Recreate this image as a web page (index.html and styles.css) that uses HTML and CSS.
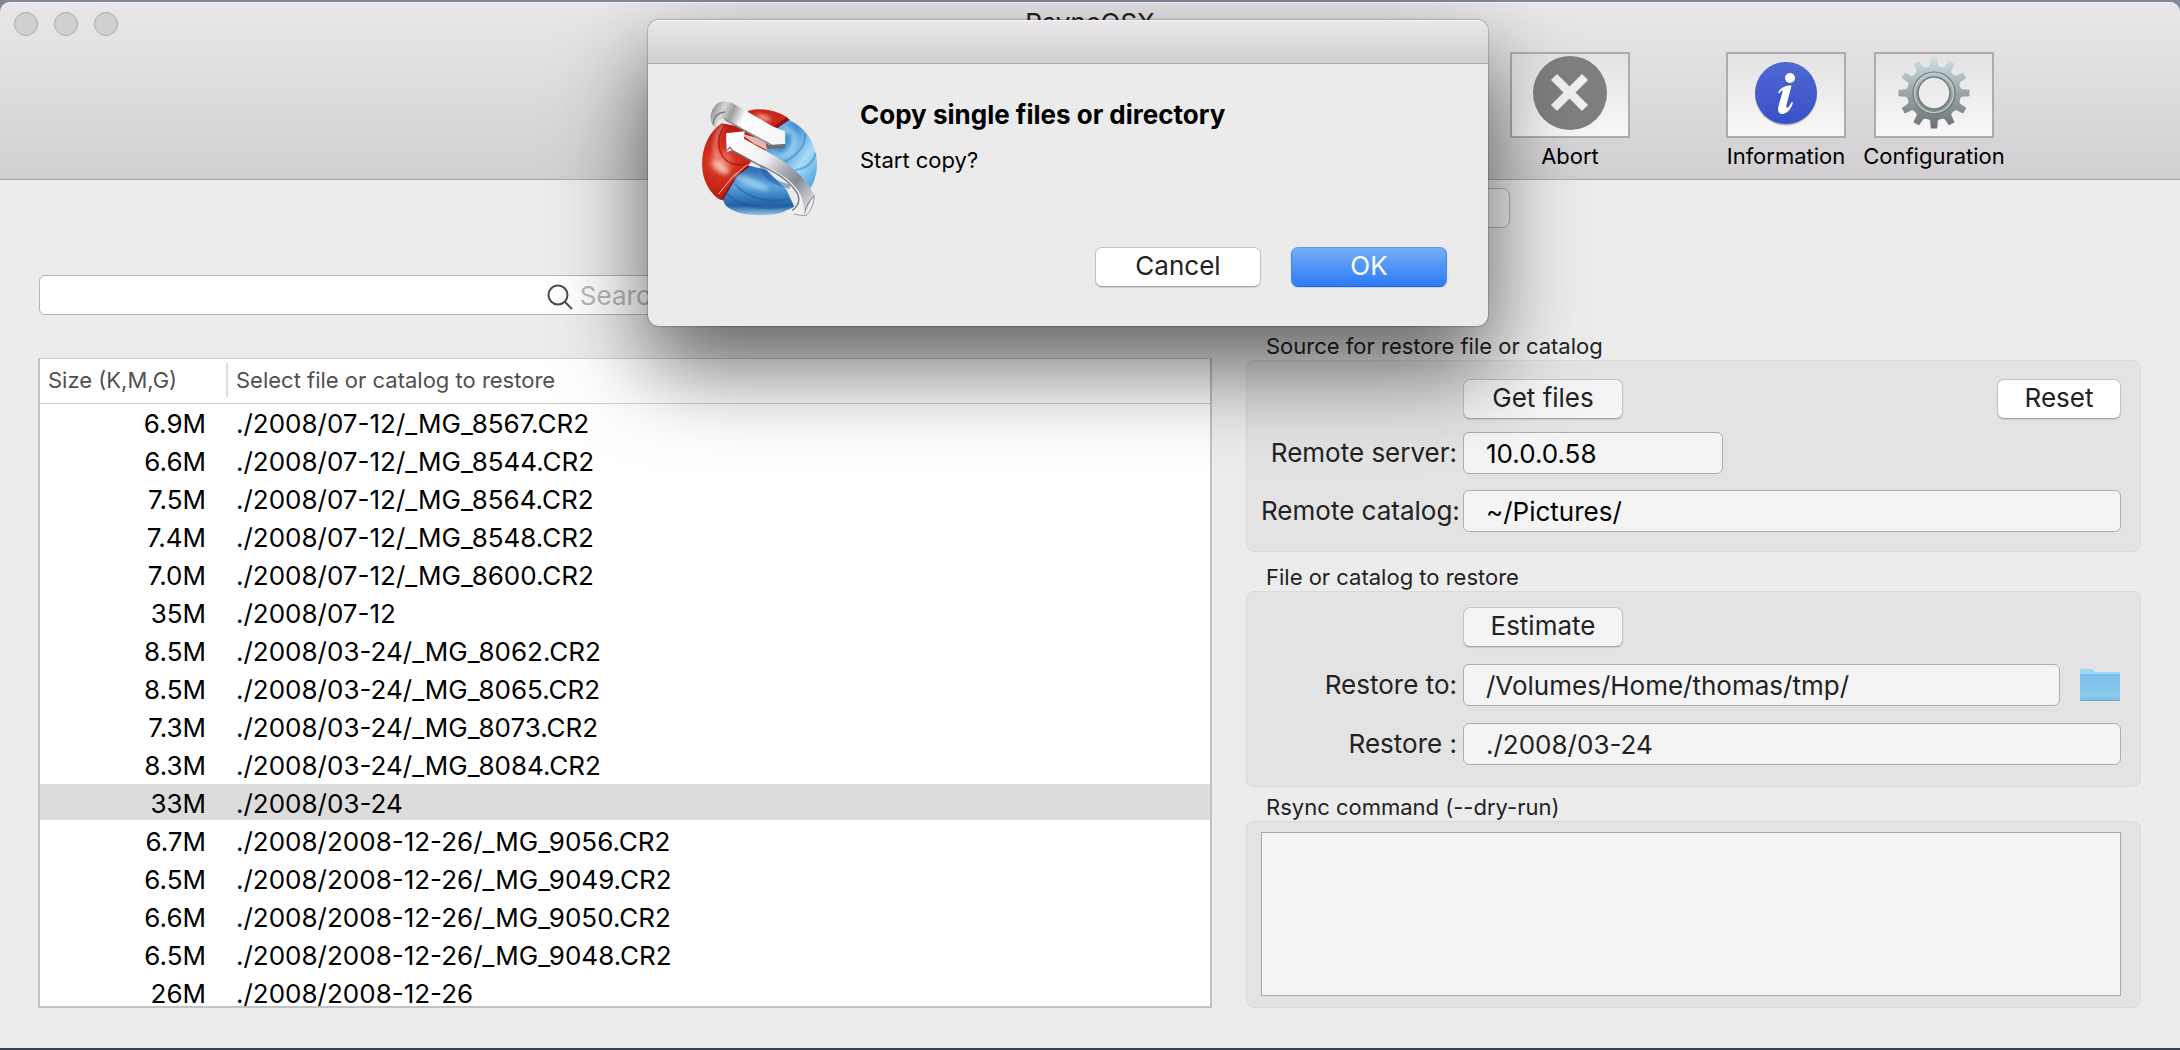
FILE: index.html
```html
<!DOCTYPE html>
<html lang="en">
<head>
<meta charset="utf-8">
<title>RsyncOSX</title>
<link rel="stylesheet" href="styles.css">
</head>
<body>
<div class="window">
  <header class="titlebar">
    <div class="lights"><span></span><span></span><span></span></div>
    <h1 class="title">RsyncOSX</h1>
    <nav class="toolbar" aria-label="Toolbar">
      <button class="tool tool-abort" type="button">
        <span class="tool-frame">
          <svg width="74" height="74" viewBox="0 0 74 74" aria-hidden="true">
            <circle cx="37" cy="37" r="37" fill="#7f7f7f"/>
            <path d="M21 21 52 52M52 21 21 52" stroke="#f0f0f0" stroke-width="8.500"/>
          </svg>
        </span>
        <span>Abort</span>
      </button>
      <button class="tool" type="button">
        <span class="tool-frame">
          <svg width="66" height="74" viewBox="0 0 66 74" aria-hidden="true">
            <defs>
              <linearGradient id="info" x1="0" y1="0" x2="0" y2="1"><stop offset="0" stop-color="#5068d2"/><stop offset="1" stop-color="#3850c8"/></linearGradient>
            </defs>
            <circle cx="33" cy="38.500" r="31" fill="#000" opacity=".25"/>
            <circle cx="33" cy="37" r="31" fill="url(#info)"/>
            <circle cx="37" cy="22" r="5" fill="#fff"/>
            <path d="M25 37C27 32 32 30 36 29.500L38.500 29.500 33.500 49C32.800 52 34 52.500 35.500 51 37 49.500 38 47 38.500 46L40 46.500C39 51 35 58 29 58 25 58 24.500 54 25.500 50L29.500 36C30 34 29 33.500 26.500 37Z" fill="#fff"/>
          </svg>
        </span>
        <span>Information</span>
      </button>
      <button class="tool" type="button">
        <span class="tool-frame">
          <svg width="74" height="74" viewBox="-37 -37 74 74" aria-hidden="true">
            <defs>
              <linearGradient id="gear" gradientUnits="userSpaceOnUse" x1="0" y1="-36" x2="0" y2="36"><stop offset="0" stop-color="#cfe0e6"/><stop offset=".5" stop-color="#9aa5a8"/><stop offset="1" stop-color="#6c7072"/></linearGradient>
              <mask id="teeth">
                <g fill="#fff">
                  <circle r="27"/>
                  <path id="tooth" d="M-7-24-3.800-28-3.200-35.500H3.200L3.800-28 7-24Z"/>
                  <use href="#tooth" transform="rotate(30)"/><use href="#tooth" transform="rotate(60)"/><use href="#tooth" transform="rotate(90)"/>
                  <use href="#tooth" transform="rotate(120)"/><use href="#tooth" transform="rotate(150)"/><use href="#tooth" transform="rotate(180)"/>
                  <use href="#tooth" transform="rotate(210)"/><use href="#tooth" transform="rotate(240)"/><use href="#tooth" transform="rotate(270)"/>
                  <use href="#tooth" transform="rotate(300)"/><use href="#tooth" transform="rotate(330)"/>
                </g>
                <circle r="15.500" fill="#000"/>
              </mask>
            </defs>
            <rect x="-37" y="-37" width="74" height="74" fill="url(#gear)" mask="url(#teeth)"/>
            <circle r="21" fill="none" stroke="#6f7a7d" stroke-width="1.200"/>
            <circle r="19.500" fill="none" stroke="#c3cdd0" stroke-width="1.200"/>
            <circle r="16" fill="none" stroke="#747a7c" stroke-width="1.500"/>
          </svg>
        </span>
        <span>Configuration</span>
      </button>
    </nav>
  </header>

  <main class="content">
    <div class="profile-row"><button class="profile" type="button" aria-label="Task"></button></div>
    <div class="columns">
      <section class="left">
        <div class="search">
          <svg class="search-icon" width="26" height="26" viewBox="0 0 26 26" fill="none" stroke="#4c4c4c" stroke-width="2" aria-hidden="true"><circle cx="11" cy="11" r="9.500"/><path d="M18 18 25 25"/></svg>
          <input type="search" placeholder="Search" aria-label="Search">
        </div>
        <div class="list">
          <table>
            <thead><tr><th scope="col" class="size"><span>Size (K,M,G)</span></th><th scope="col">Select file or catalog to restore</th></tr></thead>
            <tbody>
              <tr><td>6.9M</td><td>./2008/07-12/_MG_8567.CR2</td></tr>
              <tr><td>6.6M</td><td>./2008/07-12/_MG_8544.CR2</td></tr>
              <tr><td>7.5M</td><td>./2008/07-12/_MG_8564.CR2</td></tr>
              <tr><td>7.4M</td><td>./2008/07-12/_MG_8548.CR2</td></tr>
              <tr><td>7.0M</td><td>./2008/07-12/_MG_8600.CR2</td></tr>
              <tr><td>35M</td><td>./2008/07-12</td></tr>
              <tr><td>8.5M</td><td>./2008/03-24/_MG_8062.CR2</td></tr>
              <tr><td>8.5M</td><td>./2008/03-24/_MG_8065.CR2</td></tr>
              <tr><td>7.3M</td><td>./2008/03-24/_MG_8073.CR2</td></tr>
              <tr><td>8.3M</td><td>./2008/03-24/_MG_8084.CR2</td></tr>
              <tr class="selected"><td>33M</td><td>./2008/03-24</td></tr>
              <tr><td>6.7M</td><td>./2008/2008-12-26/_MG_9056.CR2</td></tr>
              <tr><td>6.5M</td><td>./2008/2008-12-26/_MG_9049.CR2</td></tr>
              <tr><td>6.6M</td><td>./2008/2008-12-26/_MG_9050.CR2</td></tr>
              <tr><td>6.5M</td><td>./2008/2008-12-26/_MG_9048.CR2</td></tr>
              <tr><td>26M</td><td>./2008/2008-12-26</td></tr>
            </tbody>
          </table>
        </div>
      </section>

      <section class="right">
        <h2>Source for restore file or catalog</h2>
        <div class="group source">
          <div class="row buttons"><button class="btn wide dim" type="button">Get files</button><button class="btn reset" type="button">Reset</button></div>
          <div class="row"><label for="server">Remote server:</label><input class="field short" id="server" type="text" value="10.0.0.58"></div>
          <div class="row"><label for="catalog">Remote catalog:</label><input class="field" id="catalog" type="text" value="~/Pictures/"></div>
        </div>
        <h2 class="second">File or catalog to restore</h2>
        <div class="group target">
          <div class="row buttons"><button class="btn wide dim" type="button">Estimate</button></div>
          <div class="row">
            <label for="restore-to">Restore to:</label><input class="field soft" id="restore-to" type="text" value="/Volumes/Home/thomas/tmp/">
            <button class="folder" type="button" aria-label="Choose folder">
              <svg width="42" height="34" viewBox="0 0 42 34" aria-hidden="true">
                <defs><linearGradient id="fold" x1="0" y1="0" x2="0" y2="1"><stop offset="0" stop-color="#78bfe8"/><stop offset=".8" stop-color="#8accef"/><stop offset="1" stop-color="#7dbbdd"/></linearGradient></defs>
                <path d="M1 32V2.500Q1 1 2.500 1H12.500Q14 1 14.800 2.600L15.500 4H39.500Q41 4 41 5.500V32Z" fill="#9dd5f2"/>
                <path d="M1 6H41V31.500Q41 33 39.500 33H2.500Q1 33 1 31.500Z" fill="url(#fold)"/>
                <path d="M1.500 32.500H40.500" stroke="#77a3bc"/>
              </svg>
            </button>
          </div>
          <div class="row"><label for="restore">Restore :</label><input class="field soft" id="restore" type="text" value="./2008/03-24"></div>
        </div>
        <h2 class="third"><label for="command">Rsync command (--dry-run)</label></h2>
        <div class="group output"><textarea id="command"></textarea></div>
      </section>
    </div>
  </main>

  <dialog class="sheet" open aria-labelledby="sheet-title">
    <div class="sheet-bar"></div>
    <div class="sheet-body">
      <svg class="app-icon" width="140" height="140" viewBox="0 0 420 420" aria-hidden="true">
        <defs>
          <radialGradient id="red" gradientUnits="userSpaceOnUse" cx="95" cy="215" r="150"><stop offset="0" stop-color="#f08c78"/><stop offset=".3" stop-color="#d3301f"/><stop offset=".75" stop-color="#b8190f"/><stop offset="1" stop-color="#d94a38"/></radialGradient>
          <linearGradient id="blueR" x1="0" y1="0" x2="1" y2="1"><stop offset="0" stop-color="#9fd0f2"/><stop offset=".35" stop-color="#3b8fd2"/><stop offset=".65" stop-color="#a9dcf8"/><stop offset="1" stop-color="#3795d6"/></linearGradient>
          <linearGradient id="blueB" x1="0" y1="0" x2="0" y2="1"><stop offset="0" stop-color="#2e62b0"/><stop offset=".4" stop-color="#5aa6dd"/><stop offset=".8" stop-color="#205fa5"/><stop offset="1" stop-color="#9cc8ea"/></linearGradient>
          <linearGradient id="silver" gradientUnits="userSpaceOnUse" x1="110" y1="140" x2="370" y2="350"><stop offset="0" stop-color="#fff"/><stop offset=".4" stop-color="#f0f0f2"/><stop offset=".6" stop-color="#a9abb3"/><stop offset=".74" stop-color="#858a96"/><stop offset=".86" stop-color="#b4b6bb"/><stop offset="1" stop-color="#e4e4e6"/></linearGradient>
          <linearGradient id="silverTop" gradientUnits="userSpaceOnUse" x1="65" y1="55" x2="280" y2="150"><stop offset="0" stop-color="#8d8d8d"/><stop offset=".14" stop-color="#d7d7d7"/><stop offset=".26" stop-color="#9d9d9d"/><stop offset=".42" stop-color="#fff"/><stop offset="1" stop-color="#f5f5f5"/></linearGradient>
          <filter id="soft" x="-50%" y="-50%" width="200%" height="200%"><feGaussianBlur stdDeviation="7"/></filter>
        </defs>
        <path d="M175 62Q235 48 292 82L258 115 225 185 130 130Z" fill="#c9281b"/>
        <ellipse cx="220" cy="83" rx="24" ry="7" fill="#f7b5a5" filter="url(#soft)" transform="rotate(15 220 83)"/>
        <path d="M290 82 300 90 268 120 252 108Z" fill="#8e1219"/>
        <path d="M298 90C350 115 382 165 381 225 380 265 365 295 352 305L290 230 225 185 232 165 270 155 262 115Z" fill="url(#blueR)"/>
        <path d="M278 118C315 120 325 150 300 185 285 205 260 200 245 190" fill="none" stroke="#d9effc" stroke-width="18" opacity=".5" filter="url(#soft)"/>
        <path d="M345 130Q350 180 285 215M377 190Q365 235 315 240" fill="none" stroke="#1f75bf" stroke-width="6" opacity=".45"/>
        <path d="M95 100C50 130 30 190 38 245 43 280 65 315 92 330L132 262 178 222 200 190 230 180 220 140 150 110Z" fill="url(#red)"/>
        <path d="M100 105Q65 150 82 205" fill="none" stroke="#f9c0b2" stroke-width="12" opacity=".6" filter="url(#soft)"/>
        <path d="M108 103Q70 150 98 200 122 232 172 222" fill="none" stroke="#a80f0c" stroke-width="5" opacity=".7"/>
        <ellipse cx="92" cy="232" rx="30" ry="12" fill="#fbd1c5" opacity=".8" filter="url(#soft)" transform="rotate(38 92 232)"/>
        <path d="M172 225 132 262 92 328 102 332 142 268 184 230Z" fill="#8f1220"/>
        <path d="M172 224 128 260 86 312" fill="none" stroke="#fbc8bd" stroke-width="3"/>
        <path d="M180 228 140 262 100 328Q98 350 140 366 190 382 260 372L315 355 290 300 230 240Z" fill="url(#blueB)"/>
        <ellipse cx="185" cy="278" rx="55" ry="13" fill="#aadcf6" opacity=".7" filter="url(#soft)" transform="rotate(22 185 278)"/>
        <path d="M135 282Q190 345 295 328M110 312Q180 370 295 348" fill="none" stroke="#194f94" stroke-width="6" opacity=".4"/>
        <path d="M215 225Q225 275 300 290" fill="none" stroke="#2454a3" stroke-width="14" opacity=".45"/>
        <path d="M150 130 225 150 232 180 190 160Z" fill="#e8b8b4"/>
        <path d="M62 88Q60 60 82 40 100 28 125 38L250 110 285 124 286 162 240 166 105 88Q80 82 78 116Q64 106 62 88Z" fill="url(#silverTop)"/>
        <path d="M70 104Q70 70 105 66" fill="none" stroke="#777" stroke-width="4"/>
        <path d="M103 88 245 166" stroke="#8b8b8f" stroke-width="5"/>
        <path d="M228 166 286 162 284 174 232 178Z" fill="#6d6e73"/>
        <path d="M284 362Q330 352 334 312L373 316Q372 350 350 376 318 378 284 362Z" fill="#f1f1f3"/>
        <path d="M108 130 164 124 162 146 240 190Q340 245 373 316 362 328 352 362L342 358Q338 322 326 304 290 252 205 222L128 180 110 186Z" fill="url(#silver)"/>
        <path d="M108 184 120 172 128 182 205 224Q290 258 322 310 336 340 306 362" fill="none" stroke="#77777e" stroke-width="4"/>
        <path d="M373 316Q372 350 350 376 334 378 312 372" fill="none" stroke="#9b9ca2" stroke-width="3"/>
        <path d="M344 370Q346 345 372 318" fill="none" stroke="#777b82" stroke-width="3"/>
      </svg>
      <div class="sheet-text">
        <h2 id="sheet-title">Copy single files or directory</h2>
        <p>Start copy?</p>
      </div>
      <div class="sheet-actions"><button class="btn cancel" type="button">Cancel</button><button class="btn ok" type="button">OK</button></div>
    </div>
  </dialog>
</div>
</body>
</html>
```

FILE: styles.css
```css
* { box-sizing: border-box; }

body {
  margin: 0;
  background: linear-gradient(#818a9b, #3c3f50);
  color: #222;
  font: 26px/30px Inter, "Liberation Sans", sans-serif;
}

button, input, textarea { font: inherit; color: inherit; margin: 0; }
h1, h2, p { margin: 0; }

.window {
  position: relative;
  display: flex;
  flex-direction: column;
  height: 100vh;
  border-top: 2px solid #818a9b;
  border-bottom: 2px solid #3c3f50;
}

.titlebar {
  position: relative;
  height: 178px;
  flex: none;
  background: linear-gradient(#e9e7ea, #d1cfd2);
  border-top: 1px solid #f6f6f6;
  border-bottom: 1px solid #a9a7aa;
  border-radius: 10px 10px 0 0;
}

.lights { position: absolute; left: 14px; top: 9px; display: flex; gap: 16px; }
.lights span { width: 24px; height: 24px; border-radius: 50%; background: #cfcfcf; border: 1px solid #aeaeae; }

.title {
  padding-top: 4px;
  text-align: center;
  font-size: 26px;
  font-weight: 400;
  line-height: 32px;
}

.toolbar { display: flex; justify-content: flex-end; padding: 13px 172px 0 0; }
.tool {
  width: 148px;
  padding: 0;
  border: 0;
  background: none;
  color: #000;
  font-size: 22px;
  line-height: 28px;
  display: flex;
  flex-direction: column;
  align-items: center;
  gap: 4px;
}
.tool-abort { margin-right: 68px; }
.tool-frame {
  width: 120px;
  height: 86px;
  display: flex;
  justify-content: center;
  align-items: flex-start;
  padding-top: 2px;
  border: 2px solid #adadad;
  background: linear-gradient(#e3e3e3, #f7f7f7);
}

.content {
  flex: 1;
  min-height: 0;
  display: flex;
  flex-direction: column;
  padding: 8px 39px 40px 38px;
  background: #ececec;
}

.profile-row { display: flex; justify-content: center; flex: none; }
.profile {
  width: 40%;
  height: 40px;
  border: 1px solid #b4b4b4;
  border-radius: 8px;
  background: #f4f4f4;
}

.columns { flex: 1; min-height: 0; display: grid; grid-template-columns: 1174fr 895fr; gap: 34px; }
.left, .right { display: flex; flex-direction: column; min-height: 0; min-width: 0; }
.left { padding-top: 47px; gap: 43px; }
.right { padding-top: 104px; }

.search { position: relative; width: 1132px; height: 40px; margin-left: 1px; flex: none; }
.search input {
  width: 100%;
  height: 100%;
  padding: 0 0 0 36px;
  border: 1px solid #b5b5b5;
  border-radius: 6px;
  background: #fff;
  text-align: center;
  -webkit-appearance: none;
  appearance: none;
}
.search input::placeholder { color: #b9b9b9; opacity: 1; }
.search input::-webkit-search-cancel-button { display: none; }
.search-icon { position: absolute; left: calc(50% - 58px); top: 9px; }

.list {
  flex: 1;
  min-height: 0;
  overflow: hidden;
  background: #fff;
  border: 2px solid #c1c1c1;
  border-top: 1px solid #cfcfcf;
}
table { width: 100%; border-collapse: separate; border-spacing: 0; table-layout: fixed; color: #000; }
th {
  height: 45px;
  padding: 3px 0 5px 8px;
  border-bottom: 1px solid #cfcfcf;
  color: #505050;
  font-size: 22px;
  font-weight: 400;
  text-align: left;
}
.size { width: 188px; padding-left: 0; }
.size span { display: block; padding: 2px 0 2px 8px; border-right: 2px solid #dedede; }
td { height: 38px; padding: 5px 0 1px 8px; line-height: 30px; border-bottom: 2px solid #fff; white-space: nowrap; }
td:first-child { padding: 5px 22px 1px 0; text-align: right; }
.selected td { background: #dcdcdc; }

.right h2 { flex: none; padding-left: 20px; font-size: 22px; font-weight: 400; line-height: 28px; }
.right .second { margin-top: 11px; }
.right .third { margin-top: 6px; }

.group {
  flex: none;
  padding: 18px 19px 0 14px;
  border: 1px solid #d9d9d9;
  border-radius: 8px;
  background: #e3e3e3;
}
.source { height: 192px; }
.target { height: 196px; padding-top: 15px; }
.output { flex: 1; min-height: 0; display: flex; padding: 10px 19px 11px 14px; }

.row { display: flex; align-items: center; gap: 6px; margin-bottom: 16px; }
.target .row { margin-bottom: 17px; }
.row label { flex: none; width: 196px; text-align: right; white-space: nowrap; }
.buttons { justify-content: space-between; padding-left: 202px; }
.source .buttons { margin-bottom: 13px; }

.btn {
  height: 40px;
  padding: 0 0 2px;
  border: 1px solid #c3c3c3;
  border-bottom-color: #a8a8a8;
  border-radius: 7px;
  background: #fff;
  box-shadow: 0 1px 1px rgba(0, 0, 0, .12);
}
.wide { width: 160px; }
.reset { width: 124px; }
.dim { background: #f4f4f4; }

.field {
  flex: 1;
  min-width: 0;
  height: 42px;
  padding: 0 22px;
  border: 1px solid #aeaeae;
  border-radius: 6px;
  background: #f4f4f4;
  color: #000;
}
.soft { color: #222; }
.short { flex: none; width: 260px; }
.folder { flex: none; display: flex; margin-left: 13px; padding: 0; border: 0; background: none; }

textarea { flex: 1; resize: none; border: 1px solid #a9a9a9; background: #f4f4f4; }

.sheet {
  position: absolute;
  left: 648px;
  top: 18px;
  width: 840px;
  margin: 0;
  padding: 0;
  border: 0;
  border-radius: 11px;
  overflow: hidden;
  background: #ebebeb;
  color: #222;
  box-shadow: 0 0 2px rgba(0, 0, 0, .6), 0 40px 90px rgba(0, 0, 0, .6);
}
.sheet-bar {
  height: 44px;
  background: linear-gradient(#e9e7ea, #d0ced1);
  border-top: 1px solid #f6f6f6;
  border-bottom: 1px solid #aeacaf;
}
.sheet-body {
  display: grid;
  grid-template-columns: 140px 1fr;
  column-gap: 30px;
  padding: 26px 41px 39px 42px;
}
.sheet-text { padding-top: 8px; color: #000; }
.sheet-text h2 { font-size: 26px; line-height: 34px; }
.sheet-text p { padding-top: 13px; font-size: 22px; line-height: 30px; }
.sheet-actions { grid-column: 1 / -1; display: flex; justify-content: flex-end; gap: 30px; margin-top: 17px; }
.cancel { width: 166px; }
.ok {
  width: 156px;
  border-color: #5b9ff0 #3a86f3 #1f6be8;
  background: linear-gradient(#75aff5, #2c7af6);
  color: #fff;
}
```
